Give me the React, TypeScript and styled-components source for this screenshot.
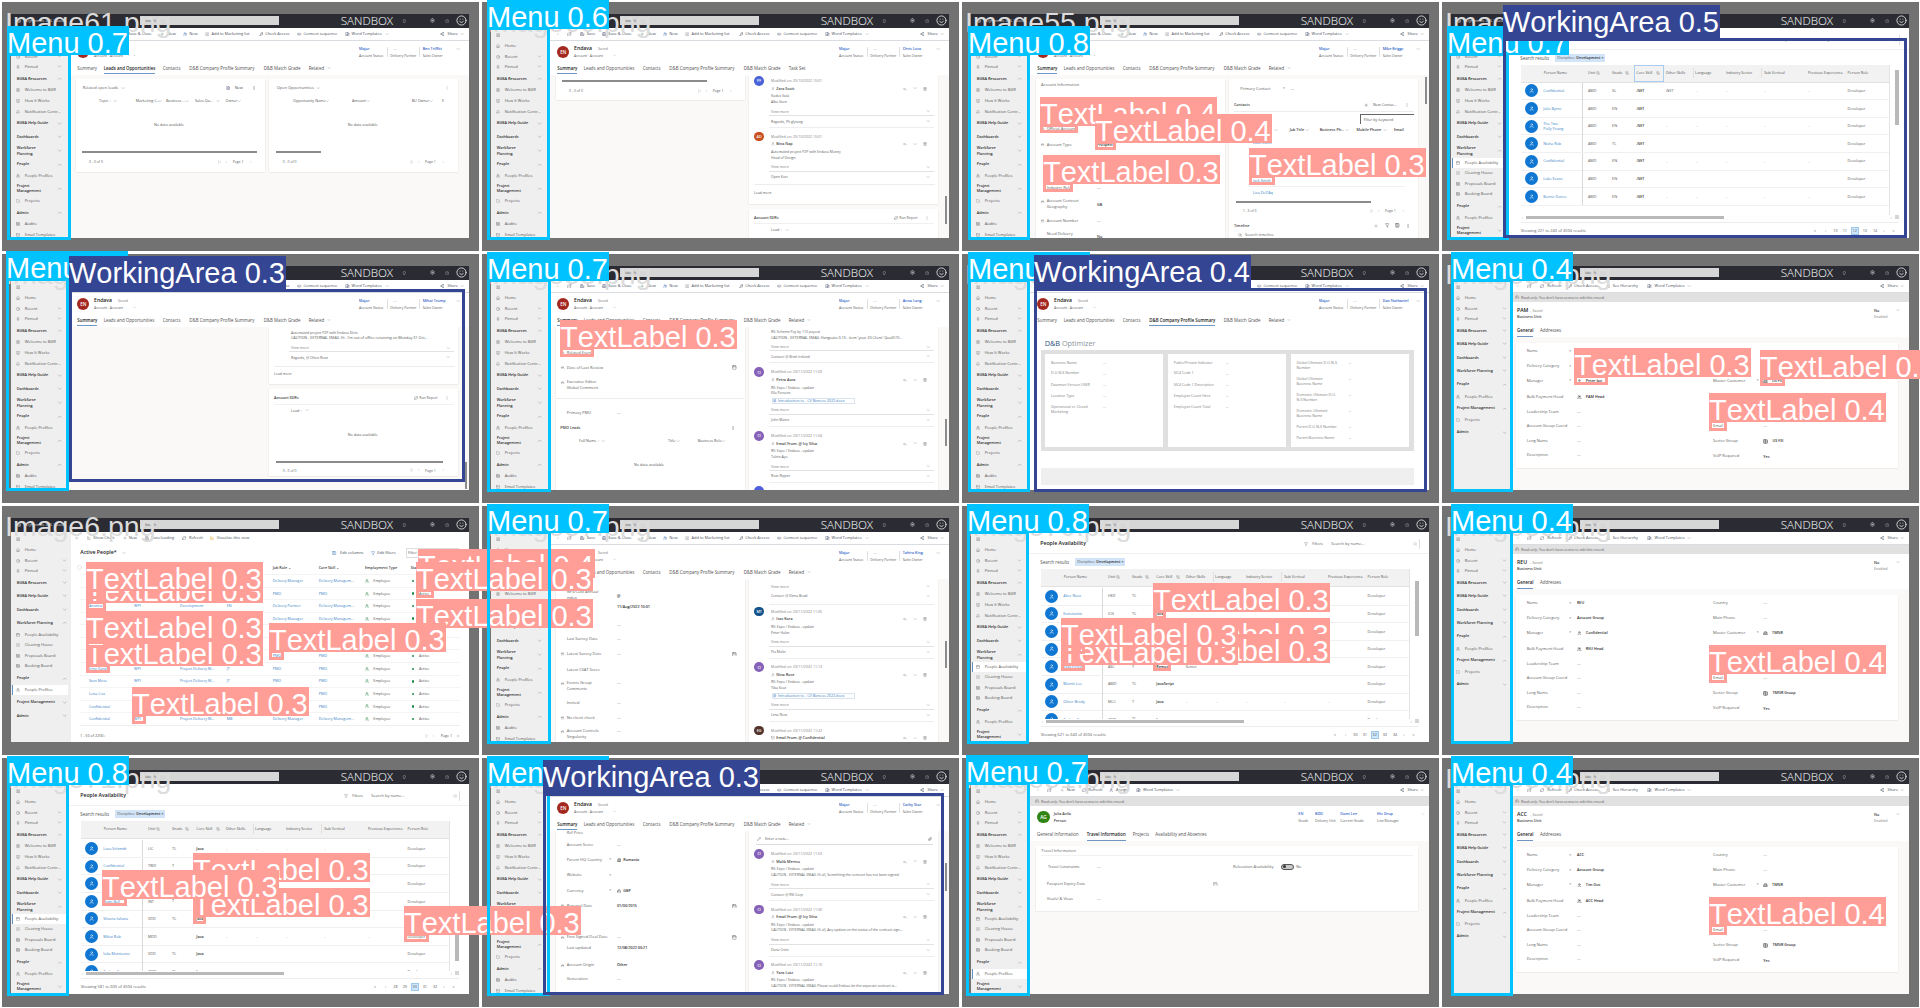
import React, { ReactNode } from "react";
import styled, { createGlobalStyle } from "styled-components";
import {
  House, Clock, Pin, FileText, BookOpen, Bell, ChevronDown, ChevronUp, Users, Folder, Calendar,
  Save, SaveAll, Plus, UserPlus, List, KeyRound, Link2, FileType, Share2, ArrowLeft, ArrowRight, ExternalLink, RefreshCw,
  Lock, Settings, Lightbulb, HelpCircle, Smile, EllipsisVertical, Reply, Trash2, User, Mail, Funnel,
  Paperclip, Pencil, Columns3, Search, ChartBar, Table, Menu as MenuIcon, Filter, ArrowUpDown, Circle, Building2,
} from "lucide-react";

/* Window contents are measured in thirds of a pixel. */
const u = (n: number) => `${(n / 3).toFixed(2)}px`;

const Global = createGlobalStyle`
  body { margin: 0; background: #fff; overflow: hidden; }
  * { box-sizing: border-box; }
`;

const Page = styled.div`
  position: relative;
  width: 1920px;
  height: 1008px;
  overflow: hidden;
  font-family: "Open Sans", "Noto Sans", sans-serif;
`;
const Mosaic = styled.div`
  display: grid;
  grid-template-columns: repeat(4, 480px);
  grid-auto-rows: 252px;
`;
const Tile = styled.div`
  position: relative;
  margin: 2px 1px 1px 2px;
  background: #727272;
  padding: 12px 0 0 9px;
`;
const FileName = styled.div`
  position: absolute;
  left: 3px;
  top: 4px;
  font: 28.5px/32px "Liberation Sans", Arial, sans-serif;
  font-kerning: none;
  color: #dcdcdc;
  white-space: nowrap;
`;
const Window = styled.div`
  width: 458px;
  height: 224.4px;
  background: #fff;
  overflow: hidden;
`;
const TopBar = styled.div`
  height: 14px;
  background: #2b2c33;
  display: flex;
  align-items: center;
`;
const SearchBox = styled.div`
  width: 139px;
  height: 9px;
  background: #d6d6d6;
  display: flex;
  align-items: center;
  padding-left: 5px;
`;
const Split = styled.div`
  display: flex;
  height: 211px;
`;
const Side = styled.div<{ $w: number }>`
  flex: none;
  width: ${(p) => u(p.$w)};
  background: #efefef;
`;
const Main = styled.div`
  flex: 1;
  min-width: 0;
`;

const TrackBox = styled.div`
  display: flow-root;
`;
const Row = styled.div<{ $gap: number }>`
  margin-top: ${(p) => u(p.$gap)};
  height: ${u(12)};
  display: flex;
  align-items: center;
`;
const RunBox = styled.div`
  display: flex;
  align-items: center;
`;
const Cell = styled.div<{ $lead: number; $w: number }>`
  flex: none;
  margin-left: ${(p) => u(p.$lead)};
  width: ${(p) => u(p.$w)};
  display: flex;
  align-items: center;
  white-space: nowrap;
  > * { flex: none; }
`;

type Tone = { size: number; color: string; weight?: number };
const tones: Record<string, Tone> = {
  body: { size: 11.2, color: "#555" },
  dark: { size: 11.2, color: "#2c2c2c", weight: 600 },
  head: { size: 11.2, color: "#3a3a3a", weight: 600 },
  dim: { size: 10.8, color: "#808080" },
  small: { size: 10.4, color: "#606060" },
  link: { size: 11.2, color: "#3a7fc4" },
  blue: { size: 11.2, color: "#2f62c8", weight: 600 },
  tool: { size: 11.8, color: "#454c57" },
  tab: { size: 13.2, color: "#505050" },
  tabOn: { size: 13, color: "#222", weight: 600 },
  title: { size: 15.5, color: "#222", weight: 600 },
  nav: { size: 12, color: "#555" },
  navHead: { size: 11.4, color: "#2e2e2e", weight: 600 },
  sandbox: { size: 35, color: "#fff", weight: 300 },
  top: { size: 12, color: "#ddd" },
  field: { size: 12, color: "#606060" },
};
const Text = styled.span<{ $tone: string }>`
  font-size: ${(p) => u(tones[p.$tone].size)};
  color: ${(p) => tones[p.$tone].color};
  font-weight: ${(p) => tones[p.$tone].weight ?? 400};
  line-height: 1;
  white-space: nowrap;
`;
const t = (s: string, tone = "body") => <Text $tone={tone}>{s}</Text>;

const Rule = styled.div<{ $w: number; $c?: string; $h?: number }>`
  width: ${(p) => u(p.$w)};
  height: ${(p) => p.$h ?? 1}px;
  background: ${(p) => p.$c ?? "#ececec"};
`;
const Dot = styled.div<{ $c: string; $d: number }>`
  flex: none;
  width: ${(p) => u(p.$d)};
  height: ${(p) => u(p.$d)};
  border-radius: 50%;
  background: ${(p) => p.$c};
  color: #fff;
  font-size: ${(p) => u(p.$d * 0.38)};
  font-weight: 600;
  display: flex;
  align-items: center;
  justify-content: center;
`;

type At = [number, ReactNode];
/* Vertical flow: each entry sits at the given centre line. */
function Track({ from, at }: { from: number; at: At[] }) {
  let prev = from;
  return (
    <TrackBox>
      {at.map(([y, node], i) => {
        const gap = y - 6 - prev;
        prev = y + 6;
        return <Row key={i} $gap={gap}>{node}</Row>;
      })}
    </TrackBox>
  );
}
/* Horizontal flow: each entry starts at the given column. */
function Run({ from, at }: { from: number; at: At[] }) {
  return (
    <RunBox>
      {at.map(([x, node], i) => (
        <Cell key={i} $lead={i === 0 ? x - from : 0} $w={(at[i + 1]?.[0] ?? x + 6) - x}>
          {node}
        </Cell>
      ))}
    </RunBox>
  );
}
const ic = (I: any, color = "#666", size = 12) => (
  <I size={size / 3} color={color} strokeWidth={2} style={{ flex: "none" }} />
);
const down = ic(ChevronDown, "#777", 13);

/* ---------- navigation ---------- */
const NavRow = styled.div<{ $on?: boolean }>`
  flex: none;
  margin-left: ${u(3)};
  width: ${u(168)};
  height: ${u(31)};
  background: ${(p) => (p.$on ? "#fff" : "transparent")};
  display: flex;
  align-items: center;
  box-shadow: ${(p) => (p.$on ? "inset 1px 0 0 #5f93c4" : "none")};
`;
const item = (y: number, I: any, s: string, chevron = 0, on = false, cx = 171): At => [
  y,
  <NavRow $on={on}>
    <Run from={36} at={[[48, ic(I, "#777")], [74, t(s, "nav")], ...(chevron ? [[cx, ic(ChevronDown, "#888", 15)] as At] : [])]} />
  </NavRow>,
];
const group = (y: number, s: string, up: boolean, cx = 170, cy = 0): At => [
  y,
  <Run from={33} at={[[50, t(s, "navHead")], ...(cy < 0 ? [] : [[cx, ic(up ? ChevronUp : ChevronDown, "#888", 16)] as At])]} />,
];
const wrapGroup = (y: number, a: string, b: string, up: boolean): At[] => [
  group(y, a, up, 170, -1),
  [y + 8, <Run from={33} at={[[170, ic(up ? ChevronUp : ChevronDown, "#888", 16)]]} />],
  group(y + 17, b, up, 170, -1),
];
type NavKind = "A" | "B" | "C" | "D";
function nav(kind: NavKind, on?: string): At[] {
  const cx = kind === "C" || kind === "D" ? 186 : 171;
  const top: At[] = [
    [104, <Run from={33} at={[[48, ic(MenuIcon, "#444", 13)]]} />],
    item(138, House, "Home"),
    item(170, Clock, "Recent", 1, false, cx),
    item(200, Pin, "Pinned", 1, false, cx),
  ];
  const res: At[] = [
    group(236, "BGBA Resources", true),
    item(271, FileText, "Welcome to BGR"),
    item(302, BookOpen, "How It Works"),
    item(335, Bell, "Notification Centr..."),
    group(370, "BGBA Help Guide", false),
    group(410, "Dashboards", false),
  ];
  if (kind === "A")
    return [
      ...top, ...res,
      ...wrapGroup(444, "Workforce", "Planning", false),
      group(493, "People", true),
      item(528, Users, "People Profiles"),
      ...wrapGroup(557, "Project", "Management", true),
      item(602, Folder, "Projects"),
      group(638, "Admin", true),
      item(673, Table, "Audits"),
      item(704, Mail, "Email Templates"),
    ];
  if (kind === "B")
    return [
      ...top, ...res,
      ...wrapGroup(444, "Workforce", "Planning", true),
      item(489, Calendar, "People Availability", 0, on === "avail"),
      item(519, List, "Clearing House"),
      item(551, Table, "Proposals Board"),
      item(583, Table, "Booking Board"),
      group(619, "People", true),
      item(654, Users, "People Profiles", 0, on === "profiles"),
      ...wrapGroup(683, "Project", "Management", false),
    ];
  const closed: At[] = [
    group(236, "BGBA Resources", false, 185),
    group(276, "BGBA Help Guide", false, 185),
    group(317, "Dashboards", false, 185),
    group(357, "Workforce Planning", kind === "D", 185),
  ];
  if (kind === "C")
    return [
      ...top, ...closed,
      group(397, "People", true, 185),
      item(434, Users, "People Profiles"),
      group(469, "Project Management", true, 185),
      item(504, Folder, "Projects"),
      group(541, "Admin", false, 185),
    ];
  return [
    ...top, ...closed,
    item(393, Calendar, "People Availability"),
    item(424, List, "Clearing House"),
    item(456, Table, "Proposals Board"),
    item(487, Table, "Booking Board"),
    group(523, "People", true, 185),
    item(559, Users, "People Profiles", 0, true),
    group(595, "Project Management", false, 185),
    group(635, "Admin", false, 185),
  ];
}

/* ---------- shared chrome ---------- */
function Shell({ name, kind, on, children }: { name: string; kind: NavKind; on?: string; children: ReactNode }) {
  return (
    <Tile>
      <Window>
        <TopBar>
          <Run
            from={33}
            at={[
              [50, ic(Table, "#ddd")],
              [78, t("Dynamics 365 | Sales", "top")],
              [420, <SearchBox>{t("Search", "small")}</SearchBox>],
              [1022, t("SANDBOX", "sandbox")],
              [1205, ic(Lightbulb, "#ccc", 14)],
              [1291, ic(Settings, "#eee", 15)],
              [1335, ic(HelpCircle, "#aaa", 13)],
              [1368, ic(Smile, "#ddd", 33)],
            ]}
          />
        </TopBar>
        <Split>
          <Side $w={kind === "C" || kind === "D" ? 180 : 174}><Track from={84} at={nav(kind, on)} /></Side>
          <Main>{children}</Main>
        </Split>
      </Window>
      <FileName>{name}</FileName>
    </Tile>
  );
}
const Toolbar = styled.div<{ $line?: boolean }>`
  height: ${u(38)};
  display: flex;
  align-items: center;
  border-bottom: 1px solid ${(p) => (p.$line ? "#d9dde2" : "transparent")};
`;
const Body = styled.div<{ $white?: boolean }>`
  height: 200px;
  padding-left: ${u(21)};
  background: ${(p) => (p.$white ? "#fff" : "#faf9f8")};
  display: flex;
`;
const Pane = styled.div<{ $w: number; $gap?: number }>`
  flex: none;
  width: ${(p) => u(p.$w)};
  margin-left: ${(p) => u(p.$gap ?? 0)};
`;
const Card = styled.div<{ $h: number; $top?: number }>`
  height: ${(p) => u(p.$h)};
  margin-top: ${(p) => u(p.$top ?? 0)};
  background: #fff;
  box-shadow: 0 0.5px 1.5px rgba(0, 0, 0, 0.14);
`;
const Thumb = styled.div<{ $top: number }>`
  flex: none;
  width: 2px;
  height: ${u(82)};
  margin: ${(p) => u(p.$top - 224)} 0 0 ${u(19)};
  background: #8c8c8c;
`;
const Tab = styled.div<{ $on?: boolean }>`
  height: ${u(34)};
  display: flex;
  align-items: center;
  border-bottom: 1px solid ${(p) => (p.$on ? "#6f95c2" : "transparent")};
`;
const Tabs = styled.div`
  height: ${u(38)};
  display: flex;
  align-items: center;
`;
const tab = (s: string, on = false) => <Tab $on={on}>{t(s, on ? "tabOn" : "tab")}</Tab>;

const accountTools: At[] = [
  [229, ic(ArrowLeft, "#ccc")], [261, ic(ExternalLink, "#667", 14)], [301, ic(Save, "#446", 13)], [320, t("Save", "tool")],
  [365, ic(SaveAll, "#446", 13)], [385, t("Save & Close", "tool")], [480, ic(Plus, "#5a8a6a", 13)], [503, t("New", "tool")],
  [548, ic(UserPlus, "#3a78b8", 13)], [568, t("New", "tool")], [615, ic(List, "#667", 13)], [635, t("Add to Marketing list", "tool")],
  [776, ic(KeyRound, "#556", 14)], [796, t("Check Access", "tool")], [892, ic(Link2, "#556", 13)], [911, t("Connect sequence", "tool")],
  [1035, ic(FileType, "#446", 14)], [1055, t("Word Templates", "tool")], [1155, down],
  [1321, ic(Share2, "#456")], [1343, t("Share", "tool")], [1379, down],
];

const HeaderBlock = styled.div<{ $h: number }>`
  height: ${(p) => u(p.$h)};
`;
const Divider = styled.div`
  width: 1px;
  height: ${u(30)};
  background: #e0e0e0;
`;
function AccountHeader({ owner, active, last = "Related" }: { owner: string; active: number; last?: string }) {
  return (
    <>
      <Toolbar $line><Run from={207} at={accountTools} /></Toolbar>
      <HeaderBlock $h={64}>
        <Track
          from={122}
          at={[
            [147, <Run from={207} at={[[282, t("Endava", "title")], [354, t("Saved", "dim")], [1077, t("Major", "blue")], [1180, t("---", "dim")], [1268, t(owner, "blue")], [1369, down]]} />],
            [155, <Run from={207} at={[[232, <Dot $c="#a3281f" $d={36}>EN</Dot>], [1160, <Divider />], [1257, <Divider />]]} />],
            [166, <Run from={207} at={[[282, t("Account · Account", "small")], [398, ic(ChevronDown, "#777", 9)], [1077, t("Account Status", "small")], [1171, t("Delivery Partner", "small")], [1268, t("Sales Owner", "small")]]} />],
          ]}
        />
      </HeaderBlock>
      <Tabs>
        <Run
          from={207}
          at={[
            [232, tab("Summary", active === 0)], [311, tab("Leads and Opportunities", active === 1)], [488, tab("Contacts")],
            [568, tab("D&B Company Profile Summary", active === 3)], [791, tab("D&B Match Grade")], [926, tab(last)],
            ...(last === "Related" ? [[980, ic(ChevronDown, "#777")] as At] : []),
          ]}
        />
      </Tabs>
    </>
  );
}
const pager = (x: number): At[] => [[x, t("|‹", "dim")], [x + 24, t("‹", "dim")], [x + 45, t("Page 1", "small")], [x + 98, t("›", "dim")]];
const bar = (w: number) => <Rule $w={w} $c="#8b8b8b" $h={2} />;
const R = (from: number, ...at: At[]) => <Run from={from} at={at} />;

/* ---------- timeline ---------- */
type Post = { y: number; c: string; n: string; date: string; who: string; a: string; b: string; foot: string; attach?: string; clip?: boolean };
function post(p: Post): At[] {
  const d = p.attach ? 22 : 0;
  const x = 806;
  const out: At[] = [
    [p.y, R(x, [823, <Dot $c={p.c} $d={29}>{p.n}</Dot>], [873, t(`Modified on: ${p.date}`, "dim")])],
    [p.y + 23, R(x, [873, ic(User, "#888", 11)], [889, t(p.who, "head")], [1268, ic(Reply, "#777")], [1299, down], [1329, ic(Trash2, "#777")])],
    [p.y + 45, R(x, [873, t(p.a, "small")])],
    [p.y + 62, R(x, [873, t(p.b, "small")])],
  ];
  if (p.clip) return out;
  if (p.attach) out.push([p.y + 86, R(x, [875, <Attachment>{ic(FileType, "#3a78c8", 10)}{t(p.attach, "link")}</Attachment>])]);
  out.push(
    [p.y + 92 + d, R(x, [873, t("View more", "dim")], [1338, down])],
    [p.y + 105 + d, R(x, [866, <Rule $w={497} $c="#e2e2e2" />])],
    [p.y + 121 + d, R(x, [873, t(p.foot, "small")], [1338, down])],
    [p.y + 140 + d, R(x, [866, <Rule $w={497} $c="#eee" />])],
  );
  return out;
}
const Attachment = styled.div`
  width: ${u(249)};
  height: ${u(19)};
  border: 1px solid #dbe3ee;
  display: flex;
  align-items: center;
  gap: ${u(4)};
  padding-left: ${u(2)};
`;
const cal = ic(Calendar, "#555", 14);
type Field = [number, string, string?, { lock?: boolean; star?: boolean; cal?: boolean; second?: string; icon?: any }?];
function fields(list: Field[]): At[] {
  const out: At[] = [];
  list.forEach(([y, label, value, o = {}]) => {
    out.push([
      y,
      R(228,
        [244, o.lock ? ic(Lock, "#666", 10) : null], [260, t(label, "field")], [388, o.star ? t("*", "small") : null],
        [411, o.icon ? ic(o.icon, "#333", 13) : t(value ?? "", value?.startsWith("-") ? "body" : "dark")],
        [430, o.icon ? t(value ?? "", "dark") : null],
        [757, o.cal ? cal : null]),
    ]);
    if (o.second) out.push([y + 18, R(228, [260, t(o.second, "field")])]);
  });
  return out;
}

/* ---------- account screens ---------- */
function LeadsScreen() {
  return (
    <Shell name="Image61.png" kind="A">
      <AccountHeader owner="Ben Triffitt" active={1} />
      <Body>
        <Pane $w={568}>
          <Card $top={14} $h={278}>
            <Track from={238} at={[
              [265, R(228, [248, t("Related open leads", "field")], [364, down], [677, ic(FileText, "#557", 13)], [704, t("New", "tool")], [756, ic(EllipsisVertical)])],
              [304, R(228, [297, t("Topic ↑")], [338, down], [407, t("Marketing C...")], [475, down], [498, t("Business ...")], [556, down], [585, t("Sales Qu...")], [647, down], [677, t("Owner")], [710, down])],
              [376, R(228, [462, t("No data available")])],
              [457, R(228, [247, bar(524)])],
              [484, R(228, [267, t("0 - 0 of 0", "small")], ...pager(653))],
            ]} />
          </Card>
        </Pane>
        <Pane $w={569} $gap={10}>
          <Card $top={14} $h={278}>
            <Track from={238} at={[
              [265, R(806, [830, t("Open Opportunities", "field")], [949, down], [1336, ic(EllipsisVertical, "#ccc")])],
              [304, R(806, [879, t("Opportunity Name")], [974, down], [1056, t("Amount")], [1099, down], [1235, t("BU Owner")], [1288, down], [1326, t("E")])],
              [376, R(806, [1043, t("No data available")])],
              [457, R(806, [829, bar(135)])],
              [484, R(806, [848, t("0 - 0 of 0", "small")], ...pager(1230))],
            ]} />
          </Card>
        </Pane>
      </Body>
    </Shell>
  );
}
const sdrHead = (y: number): At[] => [
  [y, R(806, [822, t("Account SDRs", "head")], [1241, ic(RefreshCw)], [1258, t("Run Report", "small")], [1336, ic(EllipsisVertical, "#bbb")])],
  [y + 19, R(806, [822, <Rule $w={540} $c="#f0f0f0" />])],
  [y + 38, R(806, [873, t("Lead ↑")], [915, down])],
];
function TimelineEndScreen() {
  return (
    <Shell name="Image60.png" kind="A">
      <AccountHeader owner="Chris Luca" active={0} last="Task Set" />
      <Body>
        <Pane $w={568}>
          <Card $h={76}>
            <Track from={224} at={[
              [243, R(228, [247, bar(433)])],
              [271, R(228, [267, t("0 - 0 of 0", "small")], ...pager(653))],
            ]} />
          </Card>
        </Pane>
        <Pane $w={569} $gap={10}>
          <Card $h={389}>
            <Track from={224} at={[
              ...post({ y: 243, c: "#4a63d8", n: "PF", date: "25/10/2022 10:01", who: "Zara Scott", a: "Kudos Gala", b: "Alba Gore", foot: "Regards, Ph glytang" }),
              ...post({ y: 410, c: "#c8501e", n: "AD", date: "25/10/2022 10:01", who: "Bina Nap", a: "Automated project P2P with Endava Money", b: "Head of Design", foot: "Open Kurt" }).slice(0, -1),
              [555, R(806, [822, <Rule $w={543} />])],
              [580, R(806, [822, t("Load more", "small")])],
            ]} />
          </Card>
          <Card $top={15} $h={100}><Track from={628} at={sdrHead(653)} /></Card>
        </Pane>
        <Thumb $top={589} />
      </Body>
    </Shell>
  );
}
const KeywordBox = styled.div`
  width: ${u(160)};
  height: ${u(32)};
  border: solid #666;
  border-width: 1px 0 0 1px;
  display: flex;
  align-items: center;
  padding-left: ${u(7)};
`;
function SummaryScreen() {
  return (
    <Shell name="Image55.png" kind="A">
      <AccountHeader owner="Mike Briggs" active={0} />
      <Body>
        <Pane $w={568}>
          <Card $top={14} $h={500}>
            <Track from={238} at={[
              [256, R(228, [243, t("Account Information", "field")])],
              ...fields([
                [387, "Official Account", "", { lock: true }], [434, "Account Type", "Prospect", { lock: true }],
                [564, "Industry Role", "---"], [604, "Account Contract", "", { lock: true }], [615, "", "GB"], [622, "Geography", ""],
                [663, "Account Number", "---", { lock: true }], [703, "Need Delivery", ""], [712, "", "No"],
              ]),
            ]} />
          </Card>
        </Pane>
        <Pane $w={569} $gap={10}>
          <Card $top={14} $h={500}>
            <Track from={238} at={[
              [267, R(806, [841, t("Primary Contact", "field")], [969, t("*", "small")], [992, t("---", "body")])],
              [316, R(806, [822, t("Contacts", "head")], [1212, ic(Plus, "#555", 13)], [1239, t("New Contac...")], [1334, ic(EllipsisVertical, "#aaa")])],
              [334, R(806, [822, <Rule $w={540} />])],
              [357, R(806, [1201, <KeywordBox>{t("Filter by keyword")}</KeywordBox>])],
              [391, R(806, [879, t("Full Name", "head")], [943, down], [989, t("Job Title", "head")], [1035, down], [1079, t("Business Ph...", "head")], [1156, down], [1190, t("Mobile Phone", "head")], [1268, down], [1302, t("Email", "head")])],
              [430, R(806, [879, t("Luke Davis", "link")])],
              [447, R(806, [866, <Rule $w={470} $c="#f1f1f1" />])],
              [485, R(806, [866, <Rule $w={470} $c="#f1f1f1" />])],
              [542, R(806, [879, t("Jack Smith", "link")])],
              [561, R(806, [866, <Rule $w={470} $c="#f1f1f1" />])],
              [580, R(806, [879, t("Lisa Dell'Aq", "link")])],
              [605, R(806, [829, bar(403)])],
              [632, R(806, [848, t("1 - 3 of 3", "small")], ...pager(1230))],
              [677, R(806, [822, t("Timeline", "head")], [1242, ic(Plus)], [1274, ic(Funnel, "#444", 14)], [1306, ic(Columns3, "#444", 14)], [1338, ic(EllipsisVertical)])],
              [706, R(806, [834, ic(Search)], [855, t("Search timeline", "field")])],
            ]} />
          </Card>
        </Pane>
        <Thumb $top={230} />
      </Body>
    </Shell>
  );
}
function SdrScreen() {
  return (
    <Shell name="Image63.png" kind="A">
      <AccountHeader owner="Mihai Trump" active={0} />
      <Body>
        <Pane $w={568} />
        <Pane $w={569} $gap={10}>
          <Card $h={172}>
            <Track from={224} at={[
              [241, R(806, [873, t("Automated project P2P with Endava Slots", "small")])],
              [258, R(806, [873, t("CAUTION - EXTERNAL EMAIL Hi - I'm out of office returning on Monday 31 Oct...", "body")])],
              [288, R(806, [873, t("View more", "dim")], [1338, down])],
              [300, R(806, [866, <Rule $w={497} $c="#e2e2e2" />])],
              [316, R(806, [873, t("Regards, @ Chloe Rose", "small")], [1338, down])],
              [343, R(806, [822, <Rule $w={543} />])],
              [365, R(806, [822, t("Load more", "small")])],
            ]} />
          </Card>
          <Card $top={15} $h={262}>
            <Track from={411} at={[
              ...sdrHead(438),
              [549, R(806, [1043, t("No data available")])],
              [630, R(806, [829, bar(499)])],
              [655, R(806, [848, t("0 - 0 of 0", "small")], ...pager(1230))],
            ]} />
          </Card>
        </Pane>
        <Thumb $top={630} />
      </Body>
    </Shell>
  );
}
function PmoScreen() {
  return (
    <Shell name="Image58.png" kind="A">
      <AccountHeader owner="Anna Lang" active={0} />
      <Body>
        <Pane $w={568}>
          <Card $h={214}>
            <Track from={224} at={fields([
              [302, "Related Event", "", { lock: true }], [347, "Date of Last Review", "", { lock: true, cal: true }],
              [391, "Executive Editor", "", { lock: true, second: "Global Comment" }],
            ])} />
          </Card>
          <Card $top={4} $h={300}>
            <Track from={442} at={[
              ...fields([[482, "Primary PMU", "---"]]),
              [529, R(228, [241, t("PMO Leads", "head")], [754, ic(EllipsisVertical)])],
              [567, R(228, [297, t("Full Name ↑")], [362, down], [564, t("Title")], [589, down], [653, t("Business Role")], [724, down])],
              [639, R(228, [462, t("No data available")])],
            ]} />
          </Card>
        </Pane>
        <Pane $w={569} $gap={10}>
          <Card $h={500}>
            <Track from={224} at={[
              [240, R(806, [873, t("RE: Scheme Pay by 110 payout", "small")])],
              [257, R(806, [873, t("CAUTION - EXTERNAL EMAIL Hangouts 0.13 - item 'your 20 Client' Qual0 I'll...", "body")])],
              [286, R(806, [873, t("View more", "dim")], [1338, down])],
              [297, R(806, [866, <Rule $w={497} $c="#e2e2e2" />])],
              [314, R(806, [873, t("Contact: @ Brett Ireland", "small")], [1338, down])],
              [333, R(806, [866, <Rule $w={497} />])],
              ...post({ y: 361, c: "#8661b8", n: "CI", date: "23/11/2022 11:03", who: "Petra Aura", a: "RE: Expo / Endava - update", b: "Ella Parsons", foot: "John Maine", attach: "Introduction to - CV Bizness 2022.docx" }),
              ...post({ y: 552, c: "#8661b8", n: "CI", date: "23/11/2022 11:04", who: "Email From: @ Ivy Silva", a: "RE: Expo / Endava - update", b: "Taline Ayo", foot: "Ross Ripper" }),
              [717, R(806, [823, <Dot $c="#4f5fe0" $d={29} />])],
            ]} />
          </Card>
        </Pane>
        <Thumb $top={500} />
      </Body>
    </Shell>
  );
}
const OptPanel = styled.div`
  width: ${u(1119)};
  height: ${u(303)};
  margin-left: ${u(14)};
  padding: ${u(12)} ${u(14)};
  display: flex;
  gap: ${u(14)};
  background: #e0e0e0;
`;
const OptCard = styled.div`
  flex: 1;
  background: #fff;
`;
const OptTitle = styled.div`
  height: ${u(70)};
  padding: ${u(33)} 0 0 ${u(26)};
  font-size: 7.3px;
  line-height: 10px;
  color: #8b949c;
  b { color: #1f4f7c; font-weight: 400; }
`;
const Footer = styled.div`
  margin: ${u(51)} 0 0 ${u(14)};
  width: ${u(1119)};
  height: ${u(50)};
  background: #efefef;
`;
function OptColumn({ rows }: { rows: [number, string, string?][] }) {
  return (
    <OptCard>
      <Track from={306} at={rows.flatMap(([y, a, b]) => {
        const r: At[] = [[y, R(256, [273, t(a, "dim")], [430, t("--", "small")])]];
        if (b) r.push([y + 15, R(256, [273, t(b, "dim")])]);
        return r;
      })} />
    </OptCard>
  );
}
function OptimizerScreen() {
  return (
    <Shell name="Image62.png" kind="A">
      <AccountHeader owner="Dan Nathaniel" active={3} />
      <Body $white>
        <Pane $w={1150}>
          <OptTitle><b>D&amp;B</b> Optimizer</OptTitle>
          <OptPanel>
            <OptColumn rows={[[332, "Business Name"], [364, "D-U-N-S Number"], [398, "Dataman Version USER"], [431, "Location Type"], [464, "Operational or Closed", "Marketing"]]} />
            <OptColumn rows={[[332, "Public/Private Indicator"], [364, "SIC4 Code 1"], [398, "SIC4 Code 1 Description"], [431, "Employee Count Here"], [464, "Employee Count Total"]]} />
            <OptColumn rows={[[332, "Global Ultimate D-U-N-S", "Number"], [380, "Global Ultimate", "Business Name"], [428, "Domestic Ultimate D-U-", "N-S Number"], [476, "Domestic Ultimate", "Business Name"], [524, "Parent D-U-N-S Number"], [557, "Parent Business Name"]]} />
          </OptPanel>
          <Footer />
        </Pane>
      </Body>
    </Shell>
  );
}
function SurveyScreen() {
  return (
    <Shell name="Image57.png" kind="A">
      <AccountHeader owner="Tahira King" active={0} />
      <Body>
        <Pane $w={568}>
          <Card $h={500}>
            <Track from={224} at={fields([
              [264, "NPS/Cust Annual", ""], [276, "", "@"], [282, "index", ""], [310, "", "11/Aug/2022 10:01"], [364, "", "---"],
              [406, "Last Survey Date", "---"], [450, "Latest Survey Date", "---", { lock: true, cal: true }],
              [497, "Latest CSAT Score", ""], [538, "Events Group", "---", { lock: true, second: "Comments" }],
              [597, "Invited", "---"], [642, "No client check", "---", { lock: true }],
              [682, "Account Controls", "---", { lock: true, second: "Singularity" }],
            ])} />
          </Card>
        </Pane>
        <Pane $w={569} $gap={10}>
          <Card $h={500}>
            <Track from={224} at={[
              [247, R(806, [873, t("View more", "dim")], [1338, down])],
              [276, R(806, [873, t("Contact: @ Elena Bradi", "small")], [1338, down])],
              [303, R(806, [866, <Rule $w={497} />])],
              ...post({ y: 323, c: "#14528c", n: "MT", date: "23/11/2022 11:05", who: "Isac Kora", a: "RE: Expo / Endava - update", b: "Peter Hales", foot: "Pia Malin" }),
              ...post({ y: 490, c: "#8661b8", n: "CI", date: "23/11/2022 11:13", who: "Nina Rose", a: "RE: Expo / Endava - update", b: "Tiba Kour", foot: "Lena Ross", attach: "Introduction to - CV Bizness 2022.docx" }),
              [680, R(806, [823, <Dot $c="#53342c" $d={29}>EG</Dot>], [873, t("Modified on: 23/11/2022 11:22", "dim")])],
              [703, R(806, [873, ic(Mail, "#888", 11)], [889, t("Email From: @ Confidential", "head")], [1268, ic(Reply, "#777")], [1299, down], [1329, ic(Trash2, "#777")])],
            ]} />
          </Card>
        </Pane>
        <Thumb $top={410} />
      </Body>
    </Shell>
  );
}
function NotesScreen() {
  return (
    <Shell name="Image56.png" kind="A">
      <AccountHeader owner="Cathy Stor" active={0} />
      <Body>
        <Pane $w={568}>
          <Card $h={500}>
            <Track from={224} at={fields([
              [230, "Ref Price"], [266, "Account Score", "---"], [312, "Parent HQ Country", "Romania", { star: true, icon: Building2 }],
              [358, "Website", "", { star: true }], [405, "Currency", "GBP", { star: true, icon: Lock }],
              [450, "Renewal Date", "01/03/2015", { lock: true, cal: true }], [544, "First Signed Deal Date", "---", { lock: true, cal: true }],
              [577, "Last updated", "12/08/2022 00:21"], [628, "Account Origin", "Other", { lock: true }], [668, "Generation", "---"],
            ])} />
          </Card>
        </Pane>
        <Pane $w={569} $gap={10}>
          <Card $h={500}>
            <Track from={224} at={[
              [250, R(806, [831, ic(Pencil)], [855, t("Enter a note...")], [1345, ic(Paperclip, "#333")])],
              [265, R(806, [828, <Rule $w={532} $c="#dcdcdc" />])],
              ...post({ y: 294, c: "#8661b8", n: "CI", date: "23/11/2022 11:53", who: "Malik Merino", a: "RE: Expo / Endava - update", b: "CAUTION - EXTERNAL EMAIL  Hi all,  Something the contract has not been signed.", foot: "Contact: @ RSI Corp" }),
              ...post({ y: 461, c: "#8661b8", n: "CI", date: "23/11/2022 11:30", who: "Email From: @ Ivy Silva", a: "RE: Expo / Endava - update", b: "CAUTION - EXTERNAL EMAIL  Hi all,  Any update on the status of the contract sign...", foot: "Dana Cristi" }),
              ...post({ y: 628, c: "#8661b8", n: "CI", date: "23/11/2022 11:10", who: "Yara Lutz", a: "RE: Expo / Endava - update", b: "CAUTION - EXTERNAL EMAIL  Please could Endava be the separate contract is...", foot: "", clip: true }),
            ]} />
          </Card>
        </Pane>
        <Thumb $top={322} />
      </Body>
    </Shell>
  );
}

/* ---------- business unit and person ---------- */
const Notice = styled.div`
  height: ${u(28)};
  background: #e1e1e1;
  display: flex;
  align-items: center;
`;
const notice = (x: number) => (
  <Notice>{R(x, [226, ic(Lock, "#777", 13)], [243, t("Read-only: You don't have access to edit this record.", "small")])}</Notice>
);
function UnitScreen({ name, unit, cat, manager, head, customer, sector }: Record<string, string>) {
  const row = (y: number, a: string, sa: string, va: ReactNode, b?: string, sb?: string, vb?: ReactNode, dy = 0): At[] => [
    [y, R(228, [260, t(a, "field")], [388, t(sa, "small")], [411, va], [819, dy ? null : t(b ?? "", "field")], [950, t(sb ?? "", "small")], [970, dy ? null : vb])],
    ...(dy ? [[y + dy, R(228, [819, t(b ?? "", "field")], [970, vb])] as At] : []),
  ];
  const none = t("---", "body");
  return (
    <Shell name={name} kind="C">
      <Toolbar $line>
        {R(213, [229, ic(ArrowLeft, "#ccc")], [261, ic(ExternalLink, "#667", 14)], [300, ic(RefreshCw, "#667", 13)], [322, t("Refresh", "tool")],
          [384, ic(KeyRound, "#667", 13)], [402, t("Check Access", "tool")], [497, ic(Users, "#555", 13)], [518, t("See Hierarchy", "tool")],
          [621, ic(FileType, "#446", 14)], [644, t("Word Templates", "tool")], [742, down], [1321, ic(Share2, "#456")], [1343, t("Share", "tool")], [1379, down])}
      </Toolbar>
      {notice(213)}
      <HeaderBlock $h={68}>
        <Track from={150} at={[
          [176, R(213, [231, t(unit, "title")], [271, t("- Saved", "dim")], [1302, t("No", "dark")], [1368, down])],
          [195, R(213, [231, t("Business Unit", "head")], [1302, t("Enabled", "dim")])],
        ]} />
      </HeaderBlock>
      <Tabs>{R(213, [231, tab("General", true)], [300, tab("Addresses")])}</Tabs>
      <Body>
        <Pane $w={1147} $gap={-6}>
          <Card $top={16} $h={375}>
            <Track from={272} at={[
              ...row(298, "Name", "*", t(unit, "dark"), "Country", "", none),
              ...row(343, "Delivery Category", "*", t(cat, "dark"), "Main Phone", "", none),
              ...row(387, "Manager", "*", <>{ic(User, "#333", 14)}&nbsp;{t(manager, "dark")}</>, "Master Customer", "*", <>{ic(Building2, "#333", 14)}&nbsp;{t(customer, "dark")}</>),
              ...row(435, "Bulk Payment Head", "", <>{ic(Users, "#333", 14)}&nbsp;{t(head, "dark")}</>),
              ...row(480, "Leadership Team", "", none),
              ...row(523, "Account Group Coord", "", none, "Email", "", none),
              ...row(568, "Long Name", "", none, "Sector Group", "", <>{ic(Table, "#333", 15)}&nbsp;{t(sector, "dark")}</>),
              ...row(609, "Description", "", none, "VoIP Required", "", t("Yes", "dark"), 4.5),
            ]} />
          </Card>
        </Pane>
      </Body>
    </Shell>
  );
}
const Toggle = styled.div`
  width: ${u(40)};
  height: ${u(20)};
  border: 1px solid #555;
  border-radius: 4px;
  background: #c9c9c9;
  display: flex;
  align-items: center;
  padding-left: 1px;
`;
function PersonScreen() {
  return (
    <Shell name="Image51.png" kind="B" on="profiles">
      <Toolbar $line>
        {R(207, [229, ic(ArrowLeft, "#ccc")], [261, ic(ExternalLink, "#667", 14)], [300, ic(Plus, "#999", 13)], [320, t("New", "tool")],
          [366, ic(RefreshCw, "#667", 13)], [385, t("Refresh", "tool")], [448, ic(User, "#557", 13)], [468, t("Assign", "tool")],
          [528, ic(FileType, "#446", 14)], [549, t("Word Templates", "tool")], [649, down], [1321, ic(Share2, "#456")], [1343, t("Share", "tool")], [1379, down])}
      </Toolbar>
      {notice(207)}
      <HeaderBlock $h={68}>
        <Track from={150} at={[
          [175, R(207, [281, t("Julia Avila", "head")], [1015, t("EN", "blue")], [1065, t("BOD", "blue")], [1141, t("Domi Lee", "blue")], [1251, t("Elis Drup", "blue")], [1382, ic(ChevronDown, "#999")])],
          [183, R(207, [232, <Dot $c="#2f8414" $d={37}>AG</Dot>])],
          [194, R(207, [281, t("Person", "head")], [1015, t("Grade", "small")], [1065, t("Delivery Unit", "small")], [1141, t("Current Grade", "small")], [1251, t("Line Manager", "small")])],
        ]} />
      </HeaderBlock>
      <Tabs>{R(207, [231, tab("General Information")], [380, tab("Travel Information", true)], [518, tab("Projects")], [586, tab("Availability and Absences")])}</Tabs>
      <Body>
        <Pane $w={1147}>
          <Card $top={13} $h={196}>
            <Track from={269} at={[
              [286, R(228, [244, t("Travel Information", "field")])],
              [300, R(228, [244, <Rule $w={1115} $c="#f2f2f2" />])],
              [333, R(228, [264, t("Travel Constraints")], [411, t("---", "body")], [819, t("Relocation Availability", "field")], [962, <Toggle><Dot $c="#333" $d={9} /></Toggle>], [1009, t("No", "body")])],
              [384, R(228, [260, t("Passport Expiry Date", "field")], [759, ic(Calendar, "#888", 14)])],
              [428, R(228, [260, t("Visa(s) & Visas", "field")], [411, t("---", "body")])],
            ]} />
          </Card>
        </Pane>
      </Body>
    </Shell>
  );
}

/* ---------- people availability ---------- */
const Chip = styled.div`
  width: ${u(148)};
  height: ${u(24)};
  background: #d2e5f8;
  display: flex;
  align-items: center;
  gap: ${u(4)};
  padding-left: ${u(6)};
`;
const TableArea = styled.div`
  display: flex;
  height: ${u(450)};
  margin-left: ${u(35)};
`;
const TableBox = styled.div`
  width: ${u(1109)};
  border-right: 1px solid #e4e4e4;
`;
const THead = styled.div`
  height: ${u(53)};
  background: #f2f2f2;
  border-bottom: 1px solid #e2e2e2;
  display: flex;
  align-items: center;
`;
const TBody = styled.div<{ $lift: number }>`
  height: ${u(397)};
  overflow: hidden;
  padding-top: ${(p) => u(p.$lift)};
`;
const TRow = styled.div`
  height: ${u(52.8)};
  border-bottom: 1px solid #f0f0f0;
  display: flex;
  align-items: center;
`;
const NameCell = styled.div`
  width: ${u(120)};
  height: 17.4px;
  display: flex;
  flex-direction: column;
  justify-content: center;
  gap: 1px;
  border-right: 1px solid #d8d8d8;
`;
const HeadCell = styled.div<{ $on?: boolean }>`
  width: ${u(90)};
  height: ${u(51)};
  margin-left: ${u(-8)};
  padding-left: ${u(5)};
  display: flex;
  align-items: center;
  justify-content: space-between;
  padding-right: ${u(9)};
  border: 1px solid ${(p) => (p.$on ? "#a9cdf0" : "transparent")};
`;
const VScroll = styled.div<{ $top: number; $h: number }>`
  width: ${u(12)};
  height: ${(p) => u(p.$h)};
  margin: ${(p) => u(p.$top)} 0 0 ${u(14)};
  background: #b9b9b9;
`;
const HThumb = styled.div`
  width: ${u(594)};
  height: 3px;
  background: #b9b9b9;
`;
const PageOn = styled.div`
  width: ${u(24)};
  height: ${u(26)};
  margin-left: ${u(-7)};
  background: #cfe6fa;
  border: 1px solid #9cc8ee;
  display: flex;
  align-items: center;
  justify-content: center;
`;
function AvailabilityScreen({ name, rows, lift, scroll, range, pages, hover }: { name: string; rows: string[]; lift: number; scroll: number; range: string; pages: string[]; hover?: boolean }) {
  return (
    <Shell name={name} kind="B" on="avail">
      <Track from={84} at={[
        [119, R(207, [241, t("People Availability", "title")], [1031, ic(Filter, "#777")], [1057, t("Filters")], [1114, t("Search by name...", "field")], [1358, ic(Search, "#aaa")], [1376, <Divider />])],
        [149, <Rule $w={1200} $c="#f0f0f0" />],
        [174, R(207, [241, t("Search results", "tab")], [346, <Chip>{t("Discipline:")}{t("Development ×", "dark")}</Chip>])],
      ]} />
      <HeaderBlock $h={15} />
      <TableArea>
        <TableBox>
          <THead>
            {R(242, [311, t("Person Name")], [444, t("Unit")], [469, ic(ArrowUpDown)], [516, t("Grade")], [555, ic(ArrowUpDown)],
              [589, <HeadCell $on={hover}>{t("Core Skill")}{ic(ArrowUpDown)}</HeadCell>], [677, t("Other Skills")], [760, <Divider />], [765, t("Language")],
              [858, t("Industry Sector")], [964, <Divider />], [973, t("Sub Vertical")], [1104, t("Previous Experience")], [1223, t("Person Role")])}
          </THead>
          <TBody $lift={lift}>
            {rows.map((r, i) => {
              const [n, a, g, s, o, d] = r.split("|");
              const dash = t(d ? "-" : "", "small");
              return (
                <TRow key={i}>
                  {R(242, [256, <Dot $c="#0f76d1" $d={39}>{ic(User, "#fff", 16)}</Dot>],
                    [310, <NameCell>{n.split("/").map((l) => <Text key={l} $tone="link">{l}</Text>)}</NameCell>],
                    [444, t(a)], [516, t(g, "field")], [589, t(s, "dark")], [677, t(o, "body")], [679, dash], [769, dash], [858, dash], [973, dash], [1106, dash], [1223, t("Developer")])}
                </TRow>
              );
            })}
          </TBody>
        </TableBox>
        <VScroll $top={scroll - 195} $h={164} />
      </TableArea>
      <Track from={645} at={[
        [652, R(207, [246, t("‹", "dim")], [258, <HThumb />], [1352, t("›", "small")], [1365, <Rule $w={12} $h={4} $c="#d5d5d5" />])],
        [667, R(207, [242, <Rule $w={1135} />])],
        [693, R(207, [242, t(`Showing ${range} of 4594 results`, "field")], [1122, t("«")], [1155, t("‹")], [1180, t(pages[0])], [1208, t(pages[1])],
          [1239, <PageOn>{t(pages[2])}</PageOn>], [1268, t(pages[3])], [1299, t(pages[4])], [1330, t("›")], [1358, t("»")])],
      ]} />
    </Shell>
  );
}

/* ---------- people grid ---------- */
const FilterInput = styled.div`
  width: ${u(160)};
  height: ${u(32)};
  border: 1px solid #ddd;
  padding-left: ${u(4)};
  display: flex;
  align-items: center;
`;
const people = [
  "Ana Maria|WPI|Development|EN|Delivery Manager|Delivery Managem...",
  "Bogdan Pop|WPI|Development|EN|PMO|PMO",
  "Anamaria|WPI|Development|EN|Delivery Partner|Delivery Managem...",
  "Dan Ion|WPI|Development|EN|Delivery Manager|Delivery Managem...",
  "Eva Lee|WPI|Development|EN|PMO|PMO",
  "Gina Pop|WPI|Development|EN|PMO|PMO",
  "Horia Dan|WPI|Development|EN|PMO|PMO",
  "Irina Vand|WPI|Project Delivery M...|JT|PMO|PMO",
  "Stan Moss|WPI|Project Delivery M...|JT|PMO|PMO",
  "Lena Cox|WPI|Project Delivery M...|JT|PMO|PMO",
  "Confidential|WPI|Project Delivery M...|JT|PMO|PMO",
  "Confidential|WPI|Project Delivery M...|MB|Delivery Manager|Delivery Managem...",
];
function PeopleGridScreen() {
  return (
    <Shell name="Image6.png" kind="D">
      <Toolbar>
        {R(213, [225, ic(ArrowLeft, "#888")], [262, ic(ChartBar, "#888")], [280, t("Show Chart", "tool")], [368, ic(Plus, "#777")], [386, t("New", "tool")], [434, ic(Save, "#666", 13)], [453, t("Data loading", "tool")],
          [546, ic(RefreshCw, "#556", 13)], [567, t("Refresh", "tool")], [631, ic(ChartBar, "#e0a020", 14)], [650, t("Visualize this view", "tool")])}
      </Toolbar>
      <Track from={122} at={[
        [147, R(213, [241, t("Active People*", "title")], [366, down], [997, ic(Columns3, "#3a78b8", 13)], [1020, t("Edit columns", "tool")], [1113, ic(Filter, "#3a78b8", 13)], [1132, t("Edit filters", "tool")], [1217, <FilterInput>{t("Filter by")}</FilterInput>])],
        [191, R(213, [230, ic(Circle, "#ccc", 15)], [818, t("Job Role ⌄", "head")], [956, t("Core Skill ⌄", "head")], [1095, t("Employment Type", "head")], [1232, t("Status", "head")])],
        ...people.flatMap((p, i): At[] => {
          const [n, a, d, g, j, c] = p.split("|");
          const y = 231 + i * 37.65;
          return [
            [y - 19, R(213, [241, <Rule $w={1140} $c="#f4f4f4" />])],
            [y, R(213, [267, t(n, "link")], [402, t(a, "link")], [540, t(d, "link")], [680, t(g, "link")], [818, t(j, "link")], [956, t(c, "link")],
              [1095, ic(Users, "#3f8a5a")], [1120, t("Employee")], [1236, <Dot $c="#238a4a" $d={7} />], [1257, t("Active")])],
          ];
        }),
        [665, R(213, [241, <Rule $w={1140} $c="#eee" />])],
        [697, R(213, [240, t("1 - 50 of 2200+")], [1275, t("|‹", "dim")], [1298, t("‹", "dim")], [1322, t("Page 1")], [1368, ic(ArrowRight, "#999")])],
      ]} />
    </Shell>
  );
}

/* ---------- detections ---------- */
type Kind = "Menu" | "WorkingArea" | "TextLabel";
const kinds: Record<Kind, { c: string; w: number; h: number }> = {
  Menu: { c: "#00c2ff", w: 122, h: 29 },
  WorkingArea: { c: "#344593", w: 217, h: 35 },
  TextLabel: { c: "#ff9d97", w: 177, h: 29 },
};
const Box = styled.div<{ $k: Kind; $x: number; $y: number; $w: number; $h: number }>`
  position: absolute;
  left: ${(p) => p.$x}px;
  top: ${(p) => p.$y}px;
  width: ${(p) => p.$w}px;
  height: ${(p) => p.$h}px;
  border: 3px solid ${(p) => kinds[p.$k].c};
`;
const Tag = styled.div<{ $k: Kind }>`
  position: absolute;
  left: -3px;
  top: ${(p) => -1 - kinds[p.$k].h}px;
  width: ${(p) => kinds[p.$k].w}px;
  height: ${(p) => kinds[p.$k].h}px;
  padding-top: 3px;
  background: ${(p) => kinds[p.$k].c};
  color: #fff;
  font: 29px/29px "Liberation Sans", Arial, sans-serif;
  font-kerning: none;
  white-space: nowrap;
`;
/* tile, kind, score, left, top, right, bottom */
const detections: [number, Kind, string, number, number, number, number][] = [
  [0, "Menu", "0.7", 7, 53, 71, 240],
  [1, "Menu", "0.6", 7, 27, 70, 240],
  [2, "Menu", "0.8", 8, 53, 70, 240],
  [2, "TextLabel", "0.4", 80, 124, 118, 133],
  [2, "TextLabel", "0.4", 135, 141, 156, 150],
  [2, "TextLabel", "0.3", 83, 182, 113, 192],
  [2, "TextLabel", "0.3", 289, 175, 315, 185],
  [3, "Menu", "0.7", 7, 53, 69, 240],
  [3, "WorkingArea", "0.5", 63, 38, 467, 238],
  [4, "Menu", "0.7", 6, 26, 69, 239],
  [4, "WorkingArea", "0.3", 69, 37, 465, 230],
  [5, "Menu", "0.7", 7, 27, 71, 240],
  [5, "TextLabel", "0.3", 80, 95, 114, 105],
  [6, "Menu", "0.7", 8, 27, 70, 240],
  [6, "WorkingArea", "0.4", 74, 36, 467, 240],
  [7, "Menu", "0.4", 11, 27, 73, 240],
  [7, "TextLabel", "0.3", 134, 123, 168, 133],
  [7, "TextLabel", "0.3", 320, 125, 345, 134],
  [7, "TextLabel", "0.4", 269, 168, 287, 179],
  [8, "TextLabel", "0.4", 418, 72, 436, 81],
  [8, "TextLabel", "0.3", 416, 85, 434, 94],
  [8, "TextLabel", "0.3", 416, 122, 434, 131],
  [8, "TextLabel", "0.3", 86, 97, 106, 107],
  [8, "TextLabel", "0.3", 86, 85, 106, 95],
  [8, "TextLabel", "0.3", 86, 160, 110, 169],
  [8, "TextLabel", "0.3", 86, 134, 106, 144],
  [8, "TextLabel", "0.3", 269, 146, 284, 156],
  [8, "TextLabel", "0.3", 132, 210, 146, 220],
  [9, "Menu", "0.7", 7, 27, 71, 240],
  [10, "Menu", "0.8", 7, 27, 69, 240],
  [10, "TextLabel", "0.3", 193, 106, 206, 115],
  [10, "TextLabel", "0.3", 193, 141, 211, 150],
  [10, "TextLabel", "0.3", 193, 157, 211, 167],
  [10, "TextLabel", "0.3", 101, 159, 125, 167],
  [10, "TextLabel", "0.3", 101, 141, 125, 150],
  [11, "Menu", "0.4", 11, 27, 73, 240],
  [11, "TextLabel", "0.4", 269, 168, 287, 179],
  [12, "Menu", "0.8", 7, 27, 69, 240],
  [12, "TextLabel", "0.3", 193, 124, 206, 133],
  [12, "TextLabel", "0.3", 193, 159, 206, 168],
  [12, "TextLabel", "0.3", 102, 141, 127, 150],
  [12, "TextLabel", "0.3", 404, 177, 429, 186],
  [13, "Menu", "0.7", 7, 27, 70, 240],
  [13, "WorkingArea", "0.3", 63, 37, 464, 239],
  [14, "Menu", "0.7", 6, 26, 70, 240],
  [15, "Menu", "0.4", 11, 27, 73, 240],
  [15, "TextLabel", "0.4", 269, 168, 287, 179],
];

export default function App() {
  return (
    <Page>
      <Global />
      <Mosaic>
        <LeadsScreen />
        <TimelineEndScreen />
        <SummaryScreen />
        <AvailabilityScreen name="Image76.png" hover lift={0} scroll={210} range="221 to 240" pages={["10", "11", "12", "13", "14"]}
          rows={["Confidential|AMD|SL|.NET|.NET|1", "Julie Byrne|AMD|EN|.NET||", "The Two/Polly Young|AMD|EN|.NET||1", "Nisha Rob|AMD|TL|.NET||", "Confidential|AMD|EN|.NET||1", "Luke Evans|AMD|EN|.NET||", "Bernie Dance|AMD|EN|.NET||1"]} />
        <SdrScreen />
        <PmoScreen />
        <OptimizerScreen />
        <UnitScreen name="Image33.png" unit="PAM" cat="Account Group" manager="Peter Ian" head="PAM Head" customer="US FSI" sector="US FSI" />
        <PeopleGridScreen />
        <SurveyScreen />
        <AvailabilityScreen name="Image70.png" lift={4} scroll={231} range="621 to 640" pages={["30", "31", "32", "33", "34"]}
          rows={["Alice Nora|HED|TL|Java||", "Konstantin|ICG|TL|Java||", "Ivo Petrov|ICG|TL|Java||", "Radu Pop|ICG|TL|Java||", "Elisa Perez|ASC|T|Remote|Senior|", "Martin Lee|AMD|TL|JavaScript||", "Oliver Brody|MCC|T|Java||1", "Andrea Toma|AMD|TL|Java||"]} />
        <UnitScreen name="Image35.png" unit="REU" cat="Account Group" manager="Confidential" head="REU Head" customer="TMNR" sector="TMNR Group" />
        <AvailabilityScreen name="Image71.png" lift={5} scroll={450} range="581 to 600" pages={["28", "29", "30", "31", "32"]}
          rows={["Luca Schmidt|LIC|TL|Java||1", "Confidential|TWD|T|Java||", "Ivo Petrov|AMD|TL|Java||", "Hugo Bell|INT|T|Java||", "Silvana Iuliana|VDD|TL|Java||", "Mihai Rob|MDD||Java||1", "Iulia Munteanu|VDD|TL|Java||", "Andrea Toma|AMD|TL|Java||"]} />
        <NotesScreen />
        <PersonScreen />
        <UnitScreen name="Image36.png" unit="ACC" cat="Account Group" manager="Tim Dus" head="ACC Head" customer="TMNR" sector="TMNR Group" />
      </Mosaic>
      {detections.map(([tile, k, score, x1, y1, x2, y2], i) => (
        <Box key={i} $k={k} $x={(tile % 4) * 480 + x1} $y={Math.floor(tile / 4) * 252 + y1} $w={x2 - x1} $h={y2 - y1}>
          <Tag $k={k}>{k} {score}</Tag>
        </Box>
      ))}
    </Page>
  );
}
